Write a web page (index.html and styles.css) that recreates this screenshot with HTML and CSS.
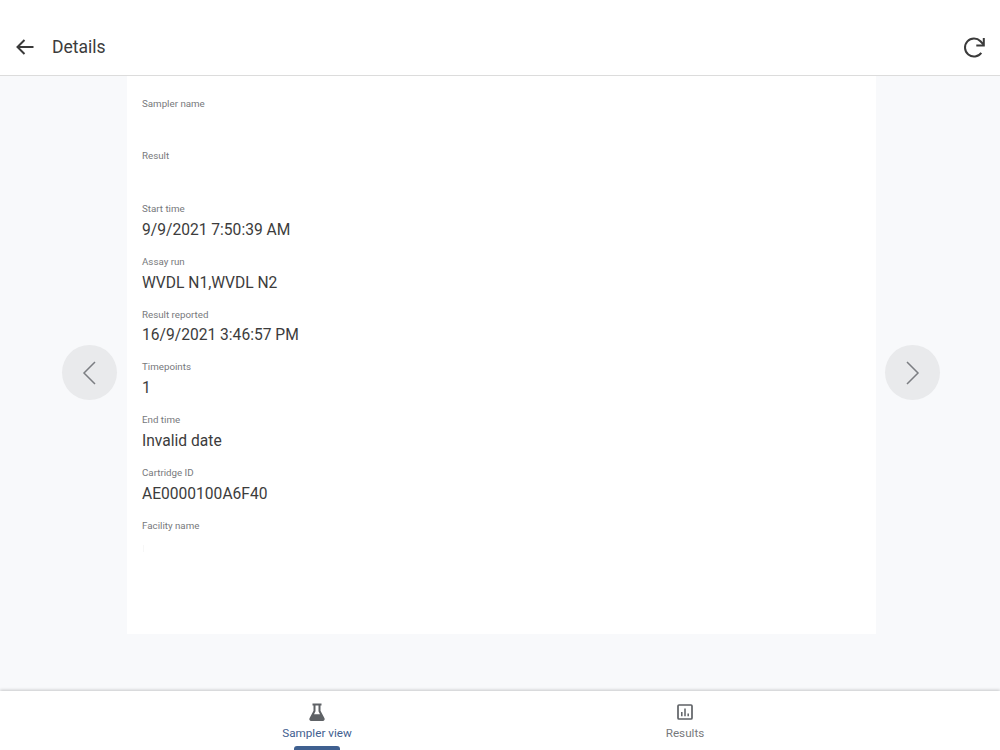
FILE: index.html

```html
<!DOCTYPE html>
<html lang="en">
<head>
  <meta charset="UTF-8">
  <title>Details</title>
  <link rel="stylesheet" href="styles.css">
</head>
<body>
  <header class="topbar">
    <button class="icon-btn back-btn" aria-label="Back">
      <svg width="24" height="24" viewBox="0 0 24 24"><path d="M20.500 12H4.500M11.500 5l-7 7 7 7" fill="none" stroke="#3a3a3a" stroke-width="2"/></svg>
    </button>
    <h1 class="title">Details</h1>
    <button class="icon-btn refresh-btn" aria-label="Refresh">
      <svg width="24" height="24" viewBox="0 0 24 24"><path d="M19.300 17.800A9 9 0 1 1 18.500 6.300L21.500 9.500" fill="none" stroke="#3a3a3a" stroke-width="2"/><path d="M21.800 3v7.500h-7.500" fill="none" stroke="#3a3a3a" stroke-width="2"/></svg>
    </button>
  </header>

  <main class="content">
    <button class="nav-circle" aria-label="Previous">
      <svg width="28" height="28" viewBox="0 0 28 28"><path d="M19 3L8 14l11 11" fill="none" stroke="#7b7e82" stroke-width="1.500"/></svg>
    </button>

    <section class="card">
      <div class="field"><div class="label">Sampler name</div><div class="value"></div></div>
      <div class="field"><div class="label">Result</div><div class="value"></div></div>
      <div class="field"><div class="label">Start time</div><div class="value">9/9/2021 7:50:39 AM</div></div>
      <div class="field"><div class="label">Assay run</div><div class="value">WVDL N1,WVDL N2</div></div>
      <div class="field"><div class="label">Result reported</div><div class="value">16/9/2021 3:46:57 PM</div></div>
      <div class="field"><div class="label">Timepoints</div><div class="value">1</div></div>
      <div class="field"><div class="label">End time</div><div class="value">Invalid date</div></div>
      <div class="field"><div class="label">Cartridge ID</div><div class="value">AE0000100A6F40</div></div>
      <div class="field"><div class="label">Facility name</div><div class="value"><i class="faint-mark"></i></div></div>
    </section>

    <button class="nav-circle" aria-label="Next">
      <svg width="28" height="28" viewBox="0 0 28 28"><path d="M8 3l11 11L8 25" fill="none" stroke="#7b7e82" stroke-width="1.500"/></svg>
    </button>
  </main>

  <nav class="tabbar">
    <a class="tab active" href="#">
      <svg width="20" height="20" viewBox="0 0 20 20"><path d="M5.500 1.500h9v2h-1v5.200l4 7.600c.6 1.200-.2 2.700-1.600 2.700H4.100c-1.400 0-2.200-1.500-1.600-2.700l4-7.600V3.500h-1z" fill="#5f6266"/><path d="M8.500 3.500h3v5.700l1.500 3H7l1.500-3z" fill="#fff"/></svg>
      <span>Sampler view</span>
      <i class="indicator"></i>
    </a>
    <a class="tab" href="#">
      <svg width="20" height="20" viewBox="0 0 20 20"><rect x="3" y="3" width="14" height="14" rx="1" fill="none" stroke="#5f6266" stroke-width="1.700"/><path d="M6.800 10v4.200M10 6.500v7.700M13.200 11.500v2.700" stroke="#5f6266" stroke-width="1.500" fill="none"/></svg>
      <span>Results</span>
    </a>
  </nav>
</body>
</html>
```

FILE: styles.css

```css
:root {
  --bg: #f8f9fb;
  --text: #3c3c3c;
  --muted: #77797c;
  --primary: #3f6090;
}

* {
  box-sizing: border-box;
}

body {
  font-family: Roboto, sans-serif;
  margin: 0;
  height: 750px;
  overflow: hidden;
  display: flex;
  flex-direction: column;
  background-color: var(--bg);
  color: var(--text);
}

button {
  border: none;
  background: none;
  padding: 0;
  cursor: pointer;
}

.topbar {
  height: 76px;
  flex: none;
  display: flex;
  align-items: center;
  background: #fff;
  border-bottom: 1px solid #dcdcdc;
  padding: 18px 14px 0 13px;
}

.icon-btn {
  width: 24px;
  height: 24px;
  display: flex;
}

.title {
  margin: 0 0 0 15px;
  flex: 1;
  font-size: 17.55px;
  font-weight: 400;
}

.content {
  height: 593px;
  flex: none;
  display: flex;
  align-items: center;
  padding-left: 62px;
}

.nav-circle {
  width: 55px;
  height: 55px;
  flex: none;
  border-radius: 50%;
  background: #e9eaec;
  display: flex;
  align-items: center;
  justify-content: center;
}

.card {
  width: 749px;
  height: 558px;
  align-self: flex-start;
  margin: 0 9px 0 10px;
  background: #fff;
  padding: 20.6px 15px 0;
}

.field {
  height: 52.75px;
}

.label {
  font-size: 9.75px;
  line-height: 14px;
  color: var(--muted);
}

.value {
  font-size: 15.6px;
  line-height: 24px;
  margin-top: 1.8px;
}

.faint-mark {
  display: block;
  width: 1px;
  height: 7px;
  margin: 12px 0 0 1px;
  background: #f7f7f7;
}

.tabbar {
  flex: 1;
  display: flex;
  justify-content: center;
  background: #fff;
  margin-top: 22px;
  padding-left: 2px;
  box-shadow: 0 -1px 3px rgba(0, 0, 0, 0.2);
}

.tab {
  position: relative;
  width: 368px;
  display: flex;
  flex-direction: column;
  align-items: center;
  padding-top: 11px;
  text-decoration: none;
  font-size: 11.7px;
  line-height: 14px;
  color: var(--muted);
}

.tab span {
  margin-top: 4px;
}

.tab.active {
  color: var(--primary);
}

.indicator {
  position: absolute;
  bottom: 0;
  width: 46px;
  height: 4px;
  border-radius: 3px 3px 0 0;
  background: var(--primary);
}
```
